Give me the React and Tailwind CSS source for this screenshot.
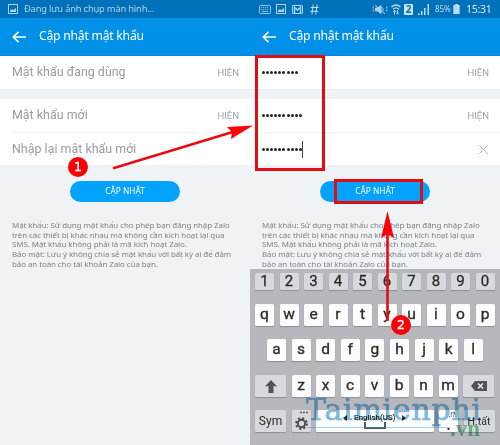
import React from 'react';

const noto = "font-['Noto_Sans',sans-serif]";
const roboto = 'font-[Roboto,sans-serif]';

function ImageIcon() {
  return (
    <svg width="10" height="10" viewBox="0 0 10 10" fill="none" stroke="#a9d4ee">
      <rect x="0.5" y="0.5" width="9" height="9" />
      <path d="M2 8V6.2L4 5.3L5.3 6.3L8 4V8Z" fill="#a9d4ee" stroke="none" />
    </svg>
  );
}

function StatusIcons() {
  return (
    <>
      <div className="flex items-center">
        <svg className="ml-[9px]" width="12" height="9" viewBox="0 0 12 9" fill="none" stroke="#8fc3e4">
          <rect x="0.5" y="0.5" width="11" height="8" rx="0.8" />
          <path d="M2 2.5H10M2 4.5H10" strokeDasharray="1 1" />
          <path d="M3 6.5H9" />
        </svg>
        <span className="ml-[5px]"><ImageIcon /></span>
        <svg className="ml-[6px]" width="11" height="9" viewBox="0 0 11 9" fill="none" stroke="#a9d4ee">
          <rect x="0.5" y="0.5" width="10" height="8" rx="0.6" />
          <path d="M2.5 8V2.3L5.5 5L8.5 2.3V8" strokeWidth="1.4" />
        </svg>
        <svg className="ml-[7px]" width="9" height="11" viewBox="0 0 9 11" fill="none" stroke="#b9dcf1" strokeWidth="1">
          <path d="M3.2 0.5L2 10.5M7 0.5L5.8 10.5M0.7 3.5H8.7M0.2 7.3H8.2" />
        </svg>
      </div>
      <div className="mr-[8px] flex items-center">
        <svg width="16" height="11" viewBox="0 0 16 11" fill="none" stroke="#a9d4ee">
          <path d="M1.2 2.5V8.5M14.8 2.5V8.5" strokeDasharray="2 1" />
          <path d="M3.5 4H5.5L9 1.5V9.5L5.5 7H3.5Z" fill="#a9d4ee" />
          <path d="M3 1L13 10M10.5 3.5Q12 5.5 10.5 7.5" />
        </svg>
        <svg className="ml-[3px]" width="10" height="11" viewBox="0 0 10 11" fill="none" stroke="#b9dcf1" strokeWidth="1.2">
          <path d="M0.5 3Q5 -1 9.5 3M2 5.2Q5 2.5 8 5.2" />
          <path d="M3.5 10.5V6.5M6.5 6V10M2.3 7.8L3.5 6.3L4.7 7.8M5.3 8.7L6.5 10.2L7.7 8.7" strokeWidth="1" />
        </svg>
        <span className={`ml-[3px] flex h-[11px] w-[9px] items-center justify-center rounded-[1px] bg-[#cbe5f5] text-[10px] font-bold leading-none text-[#0070b8] ${noto}`}>2</span>
        <svg className="ml-[5px]" width="12" height="11" viewBox="0 0 12 11" fill="#b9dcf1">
          <path d="M0 9H1.5V11H0ZM3 7H4.5V11H3ZM6 4H7.5V11H6ZM9.5 0H11V11H9.5Z" />
        </svg>
        <span className={`ml-[5px] w-[17px] whitespace-nowrap text-[8px] leading-none tracking-[-0.1px] text-[#b9dcf1] ${noto}`}>85%</span>
        <svg className="ml-px" width="7" height="10" viewBox="0 0 7 11" fill="#b9dcf1">
          <path d="M2 0H5V1.2H7V11H0V1.2H2Z" />
        </svg>
        <span className={`ml-[6px] w-[26px] whitespace-nowrap text-[10.5px] leading-none tracking-[-0.25px] text-[#d0e8f6] ${noto}`}>15:31</span>
      </div>
    </>
  );
}

function Header() {
  return (
    <div className="flex h-[38px] items-center border-b border-[#1683d0] bg-[#0190e8]">
      <svg className="ml-[12px]" width="14" height="12" viewBox="0 0 14 12" fill="none" stroke="#fff" strokeWidth="1.7">
        <path d="M14 6H1.5M6.5 0.8L1.3 6L6.5 11.2" />
      </svg>
      <span className={`ml-[13px] whitespace-nowrap text-[12.2px] leading-none tracking-[-0.24px] text-white ${noto}`}>Cập nhật mật khẩu</span>
    </div>
  );
}

function Dots({ count, cursor }) {
  return (
    <span className="flex items-center">
      <span className="flex gap-[1.1px]">
        {Array.from({ length: count }, (_, i) => (
          <span key={i} className="size-[3px] rounded-full bg-[#222]" />
        ))}
      </span>
      {cursor && <span className="h-[17px] w-px bg-[#444]" />}
    </span>
  );
}

function Field({ label, dots, cursor, action, clear }) {
  return (
    <div className="flex h-[33px] items-center justify-between pl-[12px] pr-[11px]">
      {dots ? (
        <Dots count={dots} cursor={cursor} />
      ) : (
        <span className={`whitespace-nowrap text-[12.4px] leading-none tracking-[0.03px] text-[#989c9f] ${roboto}`}>{label}</span>
      )}
      {action && <span className={`text-[9.5px] leading-none text-[#a0a4a7] ${roboto}`}>HIỆN</span>}
      {clear && (
        <svg width="11" height="11" viewBox="0 0 11 11" fill="none" stroke="#b5babd">
          <path d="M1 1L10 10M10 1L1 10" />
        </svg>
      )}
    </div>
  );
}

function Screen({ filled, status, children }) {
  return (
    <section className="flex h-[445px] w-[250px] flex-col overflow-hidden bg-[#eff3f6]">
      <div className="flex h-[18px] shrink-0 items-center justify-between bg-[#0071b8]">{status}</div>
      <Header />
      <div className="h-[34px] shrink-0 border-b border-[#e8ebed] bg-white">
        <Field label="Mật khẩu đang dùng" dots={filled && 9} action />
      </div>
      <div className="h-[9px] shrink-0" />
      <div className="h-[66px] shrink-0 bg-white">
        <Field label="Mật khẩu mới" dots={filled && 10} action />
        <div className="ml-[12px] h-px bg-[#eff1f2]" />
        <Field label="Nhập lại mật khẩu mới" dots={filled && 10} cursor clear={filled} />
      </div>
      <div className={`ml-[70px] mt-[16px] flex h-[21px] w-[110px] shrink-0 items-center justify-center rounded-full bg-[#03a2fc] text-[8.3px] leading-none text-white ${noto}`}>
        CẬP NHẬT
      </div>
      <div className={`ml-[12px] mt-[18px] h-[49px] shrink-0 whitespace-nowrap pt-px text-[7.95px] leading-[9.7px] tracking-[-0.07px] text-[#7f8386] ${noto}`}>
        <div>Mật khẩu: Sử dụng mật khẩu cho phép bạn đăng nhập Zalo</div>
        <div>trên các thiết bị khác nhau mà không cần kích hoạt lại qua</div>
        <div>SMS. Mật khẩu không phải là mã kích hoạt Zalo.</div>
        <div>Bảo mật: Lưu ý không chia sẻ mật khẩu với bất kỳ ai để đảm</div>
        <div>bảo an toàn cho tài khoản Zalo của bạn.</div>
      </div>
      {children}
    </section>
  );
}

const keyBase = 'flex shrink-0 items-center justify-center rounded-[1.5px] leading-none text-[#2b2b2d] shadow-[0_1px_1px_#8d8f94]';

function Keys({ letters }) {
  return letters.split('').map((c) => (
    <span key={c} className={`${keyBase} h-[22px] w-[19px] bg-[#fcfcfd] pb-px text-[15.5px] [-webkit-text-stroke:0.3px_#2b2b2d] ${roboto}`}>{c}</span>
  ));
}

function Keyboard() {
  return (
    <div className={`h-[176px] shrink-0 bg-[#b6b8bd] pl-[5px] pt-[4px] ${roboto}`}>
      <div className="flex gap-[5.5px]">
        {'1234567890'.split('').map((c) => (
          <span key={c} className={`${keyBase} h-[17px] w-[19px] bg-[#d7d9dc] text-[15px] [-webkit-text-stroke:0.3px_#2b2b2d]`}>{c}</span>
        ))}
      </div>
      <div className="mt-[14px] flex gap-[5.5px]"><Keys letters="qwertyuiop" /></div>
      <div className="ml-[12px] mt-[13px] flex gap-[5.6px]"><Keys letters="asdfghjkl" /></div>
      <div className="mt-[14px] flex gap-[5.5px]">
        <span className={`${keyBase} h-[22px] w-[31px] bg-[#d7d9dc]`}>
          <svg width="12" height="13" viewBox="0 0 12 13" fill="#505357"><path d="M6 0L12 6.3H8.5V13H3.5V6.3H0Z" /></svg>
        </span>
        <Keys letters="zxcvbnm" />
        <span className={`${keyBase} h-[22px] w-[31px] bg-[#d7d9dc]`}>
          <svg width="16" height="10" viewBox="0 0 16 10"><path d="M0 5L4 0H16V10H4Z" fill="#505357" /><path d="M7 2.5L12 7.5M12 2.5L7 7.5" stroke="#ececee" strokeWidth="1.5" /></svg>
        </span>
      </div>
      <div className="mt-[13px] flex gap-[5.5px]">
        <span className={`${keyBase} h-[22px] w-[31px] bg-[#d7d9dc] text-[12px]`}>Sym</span>
        <span className={`${keyBase} h-[22px] w-[19px] bg-[#d7d9dc]`}>
          <svg width="19" height="22" viewBox="0 0 19 22" fill="none" stroke="#4a4c50">
            <path d="M8 2.5H16" strokeWidth="1.3" strokeDasharray="1.8 1.2" />
            <circle cx="9.5" cy="13.5" r="3.7" strokeWidth="2" />
            <circle cx="9.5" cy="13.5" r="5.5" strokeWidth="1.8" strokeDasharray="2.16 2.16" />
          </svg>
        </span>
        <span className={`${keyBase} h-[22px] w-[117.5px] flex-col bg-[#fcfcfd]`}>
          <span className="flex items-center gap-[7px] whitespace-nowrap text-[8px] leading-[9px] [-webkit-text-stroke:0.2px_#2b2b2d]">
            <svg width="4" height="6" viewBox="0 0 4 6" fill="#333"><path d="M4 0V6L0 3Z" /></svg>
            English(US)
            <svg width="4" height="6" viewBox="0 0 4 6" fill="#333"><path d="M0 0V6L4 3Z" /></svg>
          </span>
          <span className="h-[7px] w-[22px] border-x-2 border-b-2 border-[#55585c]" />
        </span>
        <span className={`${keyBase} h-[22px] w-[19px] flex-col bg-[#fcfcfd]`}>
          <span className="ml-[7px] text-[7px] leading-[7px]">,!?</span>
          <span className="text-[14px] font-bold leading-[12px]">.</span>
        </span>
        <span className={`${keyBase} h-[22px] w-[31px] whitespace-nowrap bg-[#d7d9dc] pt-[2px] text-[10.5px]`}>H.tất</span>
      </div>
    </div>
  );
}

function Badge({ n, place }) {
  return (
    <span className={`absolute flex size-[20px] items-center justify-center rounded-full bg-[#fa0007] text-[12.5px] leading-none text-white [-webkit-text-stroke:0.4px_white] font-['DejaVu_Sans',sans-serif] ${place}`}>{n}</span>
  );
}

export default function App() {
  return (
    <main className="relative flex h-[445px] w-[500px] overflow-hidden">
      <Screen
        status={
          <div className="ml-[8px] flex items-center gap-[6px]">
            <ImageIcon />
            <span className={`whitespace-nowrap text-[9.3px] leading-none tracking-[-0.17px] text-[#a9d4ee] ${noto}`}>Đang lưu ảnh chụp màn hình...</span>
          </div>
        }
      />
      <Screen filled status={<StatusIcons />}>
        <Keyboard />
      </Screen>

      <div className="absolute left-[306px] top-[395px] whitespace-nowrap font-['DejaVu_Serif',serif] text-[30px] leading-none tracking-[0.75px] text-[#7fbde0] mix-blend-multiply [-webkit-text-stroke:0.7px_#7fbde0]">Taimienphi</div>
      <div className="absolute left-[307px] top-[427px] h-px w-[143px] bg-[#2b94cf]/40" />
      <div className="absolute left-[450px] top-[417px] font-['Liberation_Serif',serif] text-[23px] font-bold leading-none text-[#7ccb9c] mix-blend-multiply">.vn</div>

      <div className="absolute left-[255px] top-[55px] h-[116px] w-[70px] border-[3px] border-[#e20c12]" />
      <div className="absolute left-[334px] top-[179px] h-[25px] w-[89px] border-[3px] border-[#e20c12]" />
      <svg className="absolute inset-0" width="500" height="445" viewBox="0 0 500 445">
        <path d="M114 168L236 131" stroke="#e80b10" strokeWidth="2.5" strokeLinecap="round" />
        <path d="M253 125.5L227 127L232 132L231 139Z" fill="#ff0008" />
        <path d="M387.5 321V228" stroke="#e80b10" strokeWidth="2.6" />
        <path d="M387.5 211L394 238L387.5 234L381 238Z" fill="#ff0008" />
      </svg>
      <Badge n="1" place="left-[68px] top-[157px]" />
      <Badge n="2" place="left-[391px] top-[315px]" />
    </main>
  );
}
